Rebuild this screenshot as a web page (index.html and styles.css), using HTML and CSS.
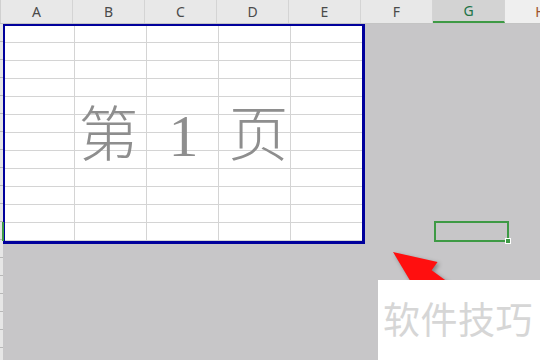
FILE: index.html
```html
<!DOCTYPE html>
<html lang="zh-CN">
<head>
  <meta charset="UTF-8">
  <title>分页预览</title>
  <link rel="stylesheet" href="styles.css">
</head>
<body>
  <div class="sheet">
    <div class="colhead">
      <div class="corner"></div>
      <div class="ch">A</div>
      <div class="ch">B</div>
      <div class="ch">C</div>
      <div class="ch">D</div>
      <div class="ch">E</div>
      <div class="ch">F</div>
      <div class="ch active">G</div>
      <div class="ch last">H</div>
    </div>
    <div class="body">
      <div class="rowhead"><span class="rowmark"></span></div>
      <div class="area">
        <div class="page">
          <div class="pagenum">
            <span>第</span>
            <span>1</span>
            <span>页</span>
          </div>
        </div>
      </div>
    </div>

    <div class="selection"><span class="handle"></span></div>

    <svg class="arrow" width="120" height="80" viewBox="0 0 120 80">
      <g transform="translate(8 8) rotate(36)">
        <polygon points="0,0 42,-18 42,-8 130,-8 130,8 42,8 42,18" fill="#ff0f0f"/>
      </g>
    </svg>

    <div class="brand">软件技巧</div>
  </div>
</body>
</html>
```

FILE: styles.css
```css
body {
  margin: 0;
  background-color: #c7c6c8;
  font-family: "Noto Sans", "Liberation Sans", sans-serif;
}

.sheet {
  position: relative;
  width: 540px;
  height: 360px;
  overflow: hidden;
  display: flex;
  flex-direction: column;
}

/* column headers */
.colhead {
  display: flex;
  height: 24px;
  background-color: #e8e8e8;
  border-bottom: 1px solid #c4c4c4;
  box-sizing: border-box;
  flex-shrink: 0;
}

.corner {
  width: 3px;
  border-right: 1px solid #d0d0d0;
  box-sizing: border-box;
}

.ch {
  width: 72px;
  flex-shrink: 0;
  box-sizing: border-box;
  border-right: 1px solid #d4d4d4;
  text-align: center;
  font-size: 14px;
  line-height: 23px;
  color: #4a4a4a;
}

.ch.active {
  background-color: #d3d3d3;
  color: #217346;
  border-bottom: 2px solid #3e9a45;
  line-height: 21px;
}

.ch.last {
  background-color: #efefef;
  color: #a0522d;
}

/* sheet body */
.body {
  display: flex;
  flex: 1;
}

.rowhead {
  position: relative;
  width: 3px;
  flex-shrink: 0;
  background-color: #e6e6e6;
  background-image: linear-gradient(to bottom, #b8b8b8 1px, transparent 1px);
  background-size: 3px 18px;
  background-position: 0 17px;
}

.rowmark {
  position: absolute;
  top: 198px;
  right: -1px;
  width: 2px;
  height: 19px;
  background-color: #3e9a45;
}

.area {
  flex: 1;
  background-color: #c7c6c8;
}

.page {
  width: 362px;
  height: 220px;
  box-sizing: border-box;
  background-color: #ffffff;
  border: 3px solid #00009c;
  border-left-width: 2px;
  border-top-width: 2px;
  background-image:
    linear-gradient(to right, #d4d4d4 1px, transparent 1px),
    linear-gradient(to bottom, #d4d4d4 1px, transparent 1px);
  background-size: 72px 18px;
  background-position: 69px 16px;
  display: flex;
  align-items: center;
  justify-content: center;
}

.pagenum {
  display: flex;
  gap: 30px;
  font-family: "Liberation Serif", "Noto Sans CJK SC", serif;
  font-size: 60px;
  font-weight: 300;
  line-height: 1;
  color: #8e8e8e;
  margin-top: 4px;
}

/* overlays */
.selection {
  position: absolute;
  left: 434px;
  top: 221px;
  width: 75px;
  height: 21px;
  box-sizing: border-box;
  border: 2px solid #3e9a45;
}

.handle {
  position: absolute;
  right: -4px;
  bottom: -4px;
  width: 4px;
  height: 4px;
  background-color: #3e9a45;
  border: 1px solid #ffffff;
}

.arrow {
  position: absolute;
  left: 385px;
  top: 244px;
  filter: drop-shadow(2px 2px 2px rgba(0, 0, 0, 0.35));
}

.brand {
  position: absolute;
  left: 378px;
  top: 280px;
  width: 162px;
  height: 80px;
  background-color: #ffffff;
  box-sizing: border-box;
  padding: 14px 0 0 5px;
  font-family: "Noto Sans CJK SC", sans-serif;
  font-size: 37px;
  line-height: 48px;
  letter-spacing: 0.5px;
  color: #d6d6d6;
}
```
